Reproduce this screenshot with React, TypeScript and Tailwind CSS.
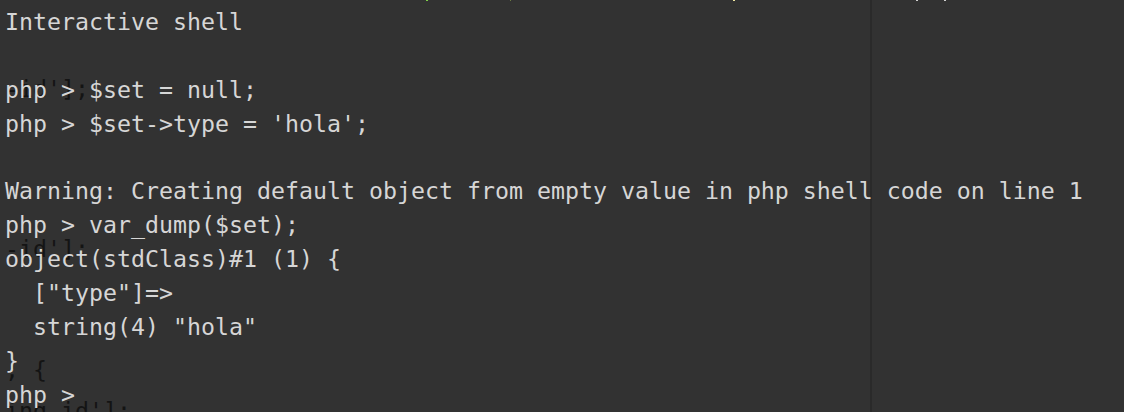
import React from "react";

const lines = [
  "Interactive shell",
  "",
  "php > $set = null;",
  "php > $set->type = 'hola';",
  "",
  "Warning: Creating default object from empty value in php shell code on line 1",
  "php > var_dump($set);",
  "object(stdClass)#1 (1) {",
  "  [\"type\"]=>",
  "  string(4) \"hola\"",
  "}",
  "php > ",
];

const ghosts: { top: number; text: string }[] = [
  { top: 72, text: "-id'];" },
  { top: 232, text: "-id'];" },
  { top: 353, text: "; {" },
  { top: 394, text: "ing-id'];" },
];

export default function App() {
  return (
    <div className="relative w-[1124px] h-[412px] overflow-hidden bg-[#323232]">
      <div className="absolute left-[870px] top-0 h-full w-[2px] bg-[#2a2a2a]" />
      <div className="absolute top-0 left-[426px] w-[2px] h-[1px] bg-[#7fd04a]" />
      <div className="absolute top-0 left-[510px] w-[1px] h-[1px] bg-[#6a7a40]" />
      <div className="absolute top-0 left-[733px] w-[2px] h-[1px] bg-[#f0e8a0]" />
      <div className="absolute top-0 left-[916px] w-[2px] h-[1px] bg-[#d0d0d0]" />
      <div className="absolute top-0 left-[944px] w-[2px] h-[1px] bg-[#d0d0d0]" />
      {ghosts.map((g, i) => (
        <div
          key={i}
          className="absolute left-[5px] whitespace-pre font-['DejaVu_Sans_Mono',monospace] text-[23.25px] leading-[34px] text-[#141414]"
          style={{ top: g.top }}
        >
          {g.text}
        </div>
      ))}
      <div className="relative flex flex-col pt-[5px] pl-[5px] font-['DejaVu_Sans_Mono',monospace] text-[23.25px] leading-[33.9px] text-[#d6d6d6] whitespace-pre">
        {lines.map((l, i) => (
          <div key={i} className="h-[33.9px]">
            {l}
          </div>
        ))}
      </div>
    </div>
  );
}
